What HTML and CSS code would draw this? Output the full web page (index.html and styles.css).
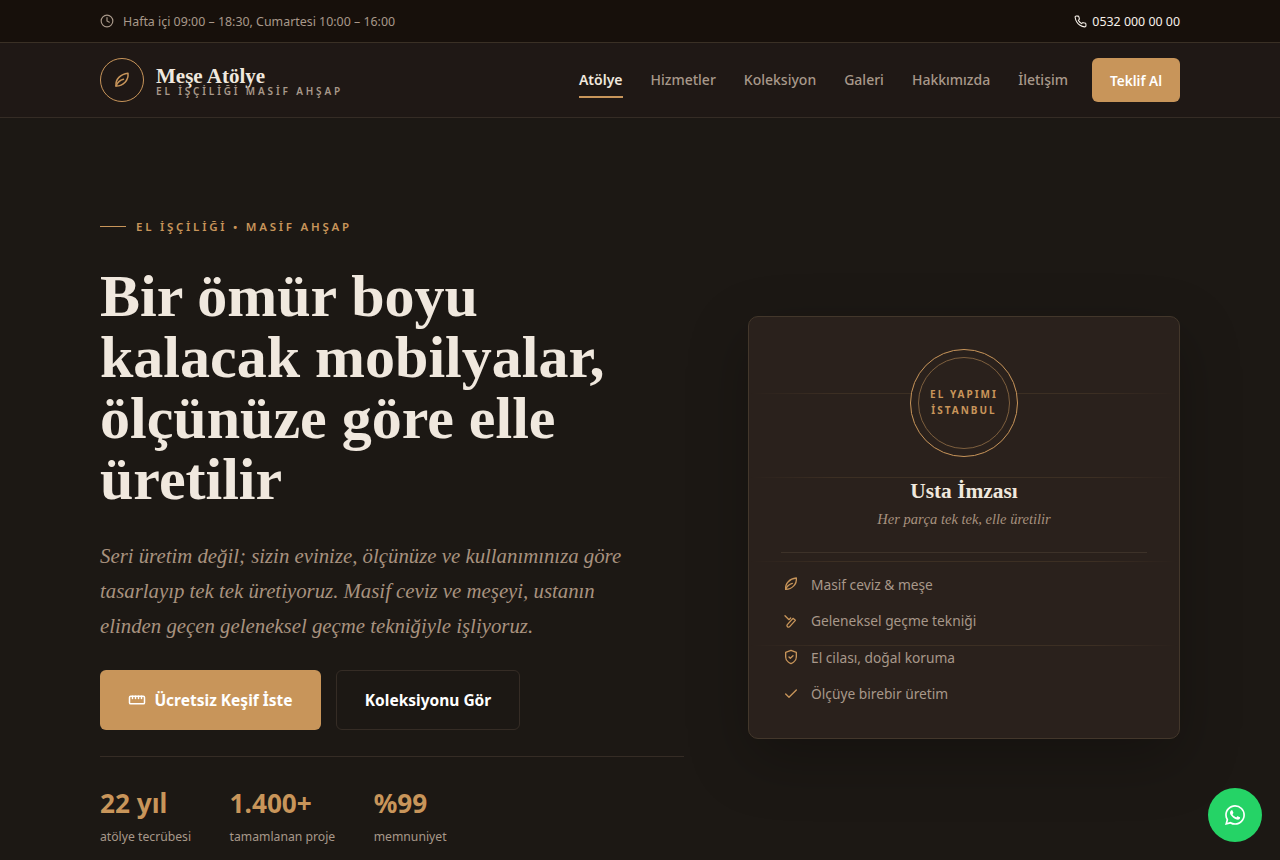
FILE: index.html
```html
<!DOCTYPE html>
<html lang="tr">
<head>
    <meta charset="UTF-8">
    <meta name="viewport" content="width=device-width, initial-scale=1.0">
    <title>Meşe Atölye</title>
    <link rel="stylesheet" href="styles.css">
</head>
<body>
    <div class="topbar">
        <div class="wrap topbar-in">
            <span class="hours">
                <svg class="ico" width="14" height="14" viewBox="0 0 24 24"><circle cx="12" cy="12" r="10"/><path d="M12 6v6l4 2"/></svg>
                Hafta içi 09:00 – 18:30, Cumartesi 10:00 – 16:00
            </span>
            <span class="phone">
                <svg class="ico" width="13" height="13" viewBox="0 0 24 24"><path d="M22 16.900v3a2 2 0 0 1-2.200 2 19.800 19.800 0 0 1-8.600-3.100 19.500 19.500 0 0 1-6-6A19.800 19.800 0 0 1 2.100 4.200 2 2 0 0 1 4.100 2h3a2 2 0 0 1 2 1.700c.1 1 .4 1.900.7 2.800a2 2 0 0 1-.5 2.100L8.100 9.900a16 16 0 0 0 6 6l1.300-1.300a2 2 0 0 1 2.100-.4c.9.3 1.800.6 2.800.7a2 2 0 0 1 1.700 2z"/></svg>
                0532 000 00 00
            </span>
        </div>
    </div>

    <header class="nav">
        <div class="wrap nav-in">
            <a class="brand" href="#">
                <span class="brand-mark">
                    <svg class="ico" width="18" height="18" viewBox="0 0 24 24"><path d="M4 20C3 11 10 4 20 3c1 9-6 17-16 17z"/><path d="M4 20c2-5 6-8 10-9"/></svg>
                </span>
                <span class="brand-text">
                    <b>Meşe Atölye</b>
                    <small>EL İŞÇİLİĞİ MASİF AHŞAP</small>
                </span>
            </a>
            <nav class="menu">
                <a class="active" href="#">Atölye</a>
                <a href="#">Hizmetler</a>
                <a href="#">Koleksiyon</a>
                <a href="#">Galeri</a>
                <a href="#">Hakkımızda</a>
                <a href="#">İletişim</a>
            </nav>
            <a class="quote" href="#">Teklif Al</a>
        </div>
    </header>

    <main class="wrap hero">
        <section class="hero-left">
            <p class="eyebrow">EL İŞÇİLİĞİ • MASİF AHŞAP</p>
            <h1>Bir ömür boyu kalacak mobilyalar, ölçünüze göre elle üretilir</h1>
            <p class="lead">Seri üretim değil; sizin evinize, ölçünüze ve kullanımınıza göre tasarlayıp tek tek üretiyoruz. Masif ceviz ve meşeyi, ustanın elinden geçen geleneksel geçme tekniğiyle işliyoruz.</p>
            <div class="actions">
                <a class="btn btn-main" href="#">
                    <svg class="ico" width="18" height="18" viewBox="0 0 24 24"><rect x="2" y="7" width="20" height="10" rx="1.500"/><path d="M6 7v3M10 7v3M14 7v3M18 7v3"/></svg>
                    Ücretsiz Keşif İste
                </a>
                <a class="btn btn-line" href="#">Koleksiyonu Gör</a>
            </div>
            <div class="stats">
                <div><strong>22 yıl</strong><span>atölye tecrübesi</span></div>
                <div><strong>1.400+</strong><span>tamamlanan proje</span></div>
                <div><strong>%99</strong><span>memnuniyet</span></div>
            </div>
        </section>

        <aside class="card">
            <div class="seal"><div class="seal-in">EL YAPIMI<br>İSTANBUL</div></div>
            <h3>Usta İmzası</h3>
            <p class="card-sub">Her parça tek tek, elle üretilir</p>
            <ul class="feats">
                <li>
                    <svg class="ico" width="16" height="16" viewBox="0 0 24 24"><path d="M4 20C3 11 10 4 20 3c1 9-6 17-16 17z"/><path d="M4 20c2-5 6-8 10-9"/></svg>
                    Masif ceviz &amp; meşe
                </li>
                <li>
                    <svg class="ico" width="16" height="16" viewBox="0 0 24 24"><path d="M3 4l6 6 2.500-2.500"/><path d="M15 8l3.500 3L10 20.500a2.200 2.200 0 0 1-3.500-3z"/></svg>
                    Geleneksel geçme tekniği
                </li>
                <li>
                    <svg class="ico" width="16" height="16" viewBox="0 0 24 24"><path d="M12 22s8-3 8-10V5l-8-3-8 3v7c0 7 8 10 8 10z"/><path d="M9 12l2 2 4-4"/></svg>
                    El cilası, doğal koruma
                </li>
                <li>
                    <svg class="ico" width="16" height="16" viewBox="0 0 24 24"><path d="M20 6L9 17l-5-5"/></svg>
                    Ölçüye birebir üretim
                </li>
            </ul>
        </aside>
    </main>

    <a class="wa" href="#">
        <svg width="20" height="20" viewBox="0 0 24 24"><path fill="#fff" d="M17.500 14.400c-.3-.15-1.770-.87-2.040-.97-.27-.1-.47-.15-.67.15-.2.300-.77.970-.95 1.170-.17.200-.35.220-.65.070-.3-.15-1.260-.46-2.400-1.480-.89-.79-1.490-1.770-1.660-2.070-.17-.3-.02-.46.130-.61.130-.13.300-.35.450-.52.150-.17.200-.3.300-.5.100-.2.050-.37-.02-.52-.08-.15-.67-1.620-.92-2.220-.24-.58-.49-.5-.67-.51h-.57c-.2 0-.52.070-.79.370-.27.300-1.040 1.020-1.040 2.490s1.070 2.890 1.220 3.090c.15.200 2.100 3.200 5.080 4.490.71.310 1.260.49 1.690.63.710.23 1.360.190 1.870.120.570-.09 1.770-.72 2.020-1.420.25-.7.250-1.290.170-1.420-.07-.12-.27-.2-.57-.35zM12.050 21.790h0a9.870 9.870 0 0 1-5.030-1.380l-.36-.21-3.740.98 1-3.650-.24-.37a9.860 9.860 0 0 1-1.510-5.260c0-5.450 4.440-9.880 9.890-9.880 2.640 0 5.120 1.030 6.990 2.900a9.830 9.830 0 0 1 2.890 6.990c0 5.450-4.440 9.880-9.890 9.880zm8.410-18.290A11.820 11.820 0 0 0 12.050 0C5.500 0 .160 5.340.160 11.890c0 2.100.55 4.140 1.590 5.950L.06 24l6.310-1.650a11.880 11.880 0 0 0 5.680 1.450h.01c6.550 0 11.890-5.340 11.890-11.890 0-3.180-1.240-6.160-3.490-8.410z"/></svg>
    </a>
</body>
</html>
```
FILE: styles.css
```css
* {
    box-sizing: border-box;
}

html, body {
    height: 860px;
    overflow: hidden;
}

body {
    margin: 0;
    background-color: #1c1814;
    color: #f0e8de;
    font-family: "Noto Sans", sans-serif;
}

a {
    text-decoration: none;
    color: inherit;
}

.wrap {
    width: 1080px;
    margin: 0 auto;
}

.ico {
    fill: none;
    stroke: currentColor;
    stroke-width: 2;
    stroke-linecap: round;
    stroke-linejoin: round;
    flex: none;
}

/* top bar */
.topbar {
    height: 43px;
    background-color: #17100b;
    border-bottom: 1px solid #3a3025;
    font-size: 12.400px;
}

.topbar-in {
    height: 42px;
    display: flex;
    align-items: center;
    justify-content: space-between;
}

.hours {
    display: flex;
    align-items: center;
    gap: 9px;
    color: #a8988a;
}

.phone {
    display: flex;
    align-items: center;
    gap: 5px;
    color: #f7f1ea;
}

/* nav */
.nav {
    height: 75px;
    background-color: #1f1815;
    border-bottom: 1px solid #352c25;
}

.nav-in {
    height: 74px;
    display: flex;
    align-items: center;
}

.brand {
    display: flex;
    align-items: center;
    gap: 12px;
    margin-right: auto;
}

.brand-mark {
    width: 44px;
    height: 44px;
    border: 1px solid #c8955a;
    border-radius: 50%;
    color: #c8955a;
    display: flex;
    align-items: center;
    justify-content: center;
}

.brand-text {
    display: flex;
    flex-direction: column;
    padding-top: 2px;
}

.brand-text b {
    font-family: "Liberation Serif", serif;
    font-size: 21px;
    line-height: 20px;
    color: #f0e8de;
}

.brand-text small {
    font-size: 10px;
    line-height: 10px;
    font-weight: 600;
    letter-spacing: 2.850px;
    color: #a8988a;
}

.menu {
    display: flex;
    gap: 28px;
    margin-right: 24px;
}

.menu a {
    font-size: 14px;
    font-weight: 500;
    color: #a8988a;
    padding: 7px 0;
    border-bottom: 2px solid transparent;
}

.menu a.active {
    color: #f0e8de;
    font-weight: 600;
    border-bottom-color: #c8955a;
}

.quote {
    width: 88px;
    height: 44px;
    background-color: #c8955a;
    border-radius: 6px;
    color: #fff;
    font-size: 13.600px;
    font-weight: 600;
    display: flex;
    align-items: center;
    justify-content: center;
}

/* hero */
.hero {
    display: grid;
    grid-template-columns: 584px 432px;
    justify-content: space-between;
    align-items: center;
    padding-top: 101px;
}

.eyebrow {
    margin: 0 0 32px;
    display: flex;
    align-items: center;
    gap: 10px;
    font-size: 11.500px;
    font-weight: 600;
    letter-spacing: 2.750px;
    color: #c8955a;
}

.eyebrow::before {
    content: "";
    width: 26px;
    height: 1px;
    background-color: #c8955a;
}

h1 {
    margin: 0 0 28px;
    font-family: "Liberation Serif", serif;
    font-size: 60px;
    line-height: 61px;
    font-weight: 700;
    color: #f0e8de;
    max-width: 560px;
}

.lead {
    margin: 0 0 27px;
    max-width: 540px;
    font-family: "Liberation Serif", serif;
    font-style: italic;
    font-size: 20.800px;
    line-height: 35px;
    color: #a8927f;
}

.actions {
    display: flex;
    gap: 15px;
    padding-bottom: 26px;
    border-bottom: 1px solid #352c25;
}

.btn {
    height: 60px;
    display: flex;
    align-items: center;
    justify-content: center;
    gap: 8px;
    border-radius: 6px;
    color: #fff;
    font-size: 15.500px;
    font-weight: 700;
}

.btn-main {
    width: 221px;
    background-color: #c8955a;
}

.btn-line {
    width: 184px;
    border: 1px solid #352c25;
}

.stats {
    display: flex;
    gap: 38.500px;
    padding-top: 27px;
}

.stats strong {
    display: block;
    font-size: 26.200px;
    line-height: 38px;
    color: #c8955a;
}

.stats span {
    display: block;
    font-size: 12.200px;
    line-height: 30px;
    color: #a8988a;
}

/* card */
.card {
    position: relative;
    align-self: start;
    margin-top: 97px;
    height: 423px;
    padding: 32px;
    background-color: #2a211c;
    border: 1px solid #43372b;
    border-radius: 10px;
    box-shadow: 0 20px 60px rgba(0, 0, 0, 0.25);
    text-align: center;
}

/* wood grain lines, they fade out at the sides */
.card::before {
    content: "";
    position: absolute;
    inset: 0 0 20px 0;
    background-image: linear-gradient(180deg, transparent 83px, rgba(200, 149, 90, 0.12) 83px);
    background-size: 100% 84px;
    background-position: 0 -7px;
    -webkit-mask-image: linear-gradient(90deg, transparent, #000 20%, #000 80%, transparent);
    mask-image: linear-gradient(90deg, transparent, #000 20%, #000 80%, transparent);
}

.seal {
    position: relative;
    width: 108px;
    height: 108px;
    margin: 0 auto 20px;
    padding: 7px;
    border: 1px solid #c8955a;
    border-radius: 50%;
    background-color: #2a211c;
}

.seal-in {
    width: 92px;
    height: 92px;
    padding-bottom: 2px;
    border: 1px solid #7d5f3e;
    border-radius: 50%;
    display: flex;
    align-items: center;
    justify-content: center;
    font-size: 10px;
    line-height: 16px;
    font-weight: 700;
    letter-spacing: 2px;
    color: #c8955a;
}

.card h3 {
    position: relative;
    margin: 0;
    font-family: "Liberation Serif", serif;
    font-size: 21.400px;
    line-height: 28px;
    color: #f0e8de;
}

.card-sub {
    position: relative;
    margin: 4px 0 0;
    font-family: "Liberation Serif", serif;
    font-style: italic;
    font-size: 14.500px;
    line-height: 20px;
    color: #a8927f;
}

.feats {
    position: relative;
    list-style: none;
    margin: 23px 0 0;
    padding: 13px 0 0;
    border-top: 1px solid #3d3229;
    text-align: left;
}

.feats li {
    display: flex;
    align-items: center;
    gap: 12px;
    height: 36.500px;
    padding-left: 2px;
    font-size: 13.760px;
    color: #a8988a;
}

.feats .ico {
    color: #c8955a;
}

.wa {
    position: fixed;
    right: 18px;
    bottom: 18px;
    width: 54px;
    height: 54px;
    border-radius: 50%;
    background-color: #25d366;
    display: flex;
    align-items: center;
    justify-content: center;
}
```
